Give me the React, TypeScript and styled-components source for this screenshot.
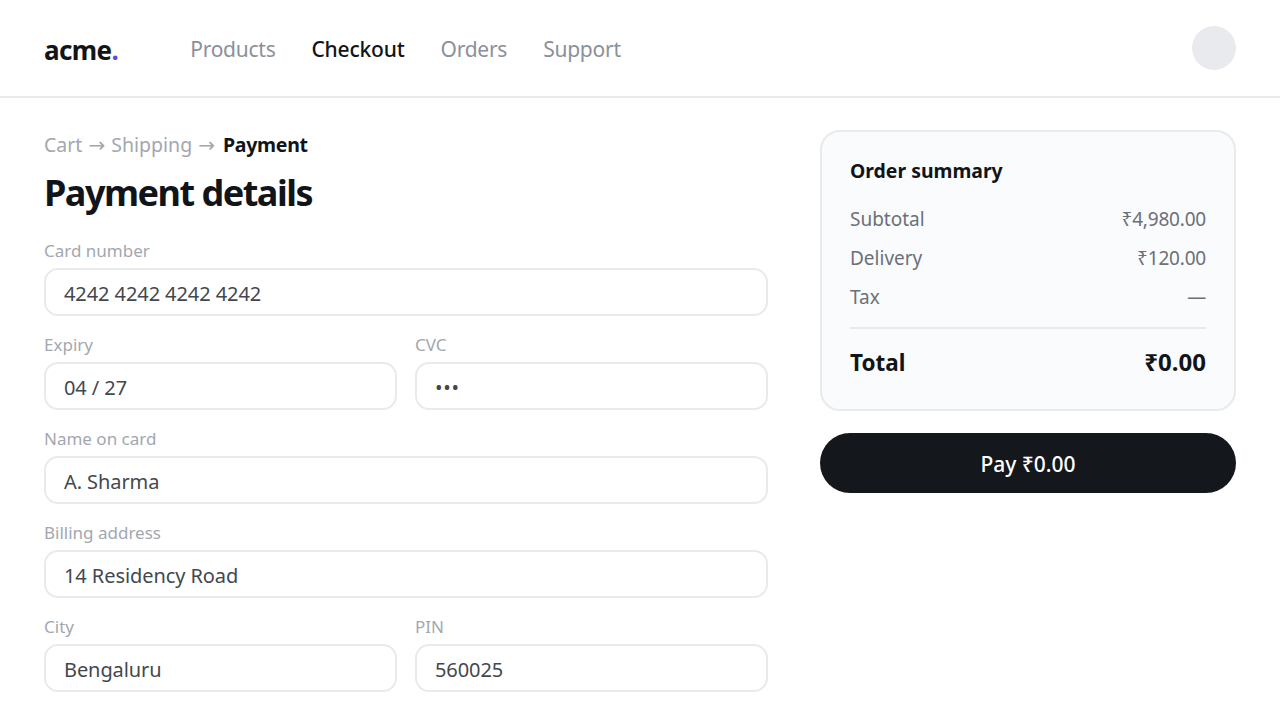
import React from 'react';
import styled, { createGlobalStyle } from 'styled-components';

const GlobalStyle = createGlobalStyle`
  html, body {
    margin: 0;
    padding: 0;
    height: 100%;
    background: #fff;
    overflow: hidden;
  }
  body {
    font-family: "Noto Sans", "Open Sans", sans-serif;
    color: #111418;
  }
  * {
    box-sizing: border-box;
  }
`;

const Header = styled.header`
  height: 98px;
  padding: 0 44px;
  display: flex;
  align-items: center;
  gap: 72px;
  border-bottom: 2px solid #e8eaed;
`;

const Logo = styled.div`
  padding-top: 3px;
  font-size: 26px;
  font-weight: 700;
  letter-spacing: -0.6px;
  color: #111418;

  span {
    color: #5b4bd6;
  }
`;

const Nav = styled.nav`
  display: flex;
  gap: 36px;
  flex: 1;
  padding-top: 2px;
`;

const NavLink = styled.a<{ $active?: boolean }>`
  font-size: 21px;
  font-weight: ${p => (p.$active ? 500 : 400)};
  letter-spacing: ${p => (p.$active ? '-0.2px' : '-0.25px')};
  color: ${p => (p.$active ? '#111418' : '#8b909a')};
`;

const Avatar = styled.div`
  width: 44px;
  height: 44px;
  border-radius: 50%;
  background: #e8eaed;
`;

const Main = styled.main`
  display: grid;
  grid-template-columns: 724px 416px;
  gap: 52px;
  padding: 32px 44px 0;
`;

const Breadcrumb = styled.div`
  font-size: 19.5px;
  line-height: 30px;
  color: #a3a7af;

  strong {
    margin-left: 2px;
    font-weight: 700;
    letter-spacing: -0.3px;
    color: #111418;
  }
`;

const Arrow = styled.span`
  margin: 0 1px;
  font-family: "DejaVu Sans", sans-serif;
  font-size: 20px;
`;

const Title = styled.h1`
  margin: 9px 0 19px;
  font-size: 36px;
  line-height: 48px;
  font-weight: 700;
  letter-spacing: -1.5px;
  color: #111418;
`;

const Form = styled.div`
  display: flex;
  flex-direction: column;
  gap: 14px;
`;

const FieldRow = styled.div`
  display: grid;
  grid-template-columns: 1fr 1fr;
  gap: 18px;
`;

const Field = styled.div`
  display: flex;
  flex-direction: column;
  gap: 2px;
`;

const Label = styled.label`
  font-size: 17px;
  line-height: 30px;
  color: #a3a7af;
`;

const Input = styled.div<{ $masked?: boolean }>`
  height: 48px;
  padding: 2px 18px 0;
  display: flex;
  align-items: center;
  border: 2px solid #e8eaed;
  border-radius: 14px;
  background: #fff;
  font-size: 20px;
  letter-spacing: ${p => (p.$masked ? '0.7px' : '-0.08px')};
  color: #43484e;
`;

const Aside = styled.aside`
  display: flex;
  flex-direction: column;
  gap: 22px;
`;

const Card = styled.section`
  height: 281px;
  padding: 22px 28px;
  border: 2px solid #e8eaed;
  border-radius: 20px;
  background: #fafbfd;
`;

const CardTitle = styled.h2`
  margin: 0 0 12px;
  font-size: 19.4px;
  line-height: 34px;
  font-weight: 700;
  color: #111418;
`;

const SummaryRow = styled.div`
  display: flex;
  justify-content: space-between;
  font-size: 19px;
  line-height: 39px;
  color: #6b7078;
`;

const Amount = styled.span`
  letter-spacing: -0.2px;
`;

const Divider = styled.hr`
  margin: 10px 0 13px;
  border: 0;
  border-top: 2px solid #e8eaed;
`;

const TotalRow = styled.div`
  display: flex;
  justify-content: space-between;
  align-items: baseline;
  font-size: 22.5px;
  line-height: 40px;
  font-weight: 700;
  color: #111418;
`;

const TotalAmount = styled.span`
  font-size: 24px;
`;

const PayButton = styled.button`
  height: 60px;
  padding: 2px 0 0;
  border: 0;
  border-radius: 30px;
  background: #14171c;
  color: #fff;
  font-family: inherit;
  font-size: 21px;
  font-weight: 500;
`;

function TextField({ label, value, masked }: { label: string; value: string; masked?: boolean }) {
  return (
    <Field>
      <Label>{label}</Label>
      <Input $masked={masked}>{value}</Input>
    </Field>
  );
}

export default function App() {
  return (
    <>
      <GlobalStyle />
      <Header>
        <Logo>acme<span>.</span></Logo>
        <Nav>
          <NavLink>Products</NavLink>
          <NavLink $active>Checkout</NavLink>
          <NavLink>Orders</NavLink>
          <NavLink>Support</NavLink>
        </Nav>
        <Avatar />
      </Header>
      <Main>
        <div>
          <Breadcrumb>Cart <Arrow>→</Arrow> Shipping <Arrow>→</Arrow> <strong>Payment</strong></Breadcrumb>
          <Title>Payment details</Title>
          <Form>
            <TextField label="Card number" value="4242 4242 4242 4242" />
            <FieldRow>
              <TextField label="Expiry" value="04 / 27" />
              <TextField label="CVC" value="•••" masked />
            </FieldRow>
            <TextField label="Name on card" value="A. Sharma" />
            <TextField label="Billing address" value="14 Residency Road" />
            <FieldRow>
              <TextField label="City" value="Bengaluru" />
              <TextField label="PIN" value="560025" />
            </FieldRow>
          </Form>
        </div>
        <Aside>
          <Card>
            <CardTitle>Order summary</CardTitle>
            <SummaryRow><span>Subtotal</span><Amount>₹4,980.00</Amount></SummaryRow>
            <SummaryRow><span>Delivery</span><Amount>₹120.00</Amount></SummaryRow>
            <SummaryRow><span>Tax</span><Amount>—</Amount></SummaryRow>
            <Divider />
            <TotalRow><span>Total</span><TotalAmount>₹0.00</TotalAmount></TotalRow>
          </Card>
          <PayButton>Pay ₹0.00</PayButton>
        </Aside>
      </Main>
    </>
  );
}
